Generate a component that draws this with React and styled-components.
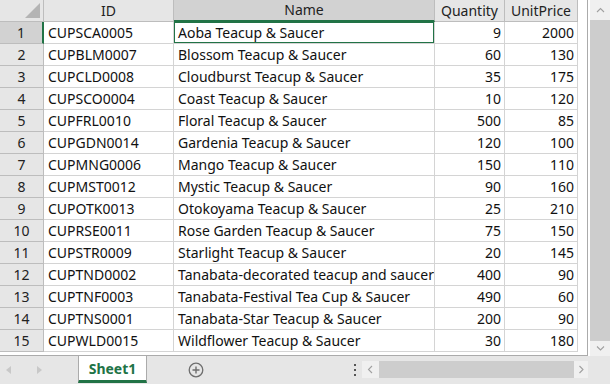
import { createGlobalStyle, styled } from "styled-components";

const GlobalStyle = createGlobalStyle`
    body {
        margin: 0;
        background: #ffffff;
        font-family: "Noto Sans", "Open Sans", sans-serif;
    }
`;

const rows = [
    ["CUPSCA0005", "Aoba Teacup & Saucer", 9, 2000],
    ["CUPBLM0007", "Blossom Teacup & Saucer", 60, 130],
    ["CUPCLD0008", "Cloudburst Teacup & Saucer", 35, 175],
    ["CUPSCO0004", "Coast Teacup & Saucer", 10, 120],
    ["CUPFRL0010", "Floral Teacup & Saucer", 500, 85],
    ["CUPGDN0014", "Gardenia Teacup & Saucer", 120, 100],
    ["CUPMNG0006", "Mango Teacup & Saucer", 150, 110],
    ["CUPMST0012", "Mystic Teacup & Saucer", 90, 160],
    ["CUPOTK0013", "Otokoyama Teacup & Saucer", 25, 210],
    ["CUPRSE0011", "Rose Garden Teacup & Saucer", 75, 150],
    ["CUPSTR0009", "Starlight Teacup & Saucer", 20, 145],
    ["CUPTND0002", "Tanabata-decorated teacup and saucer", 400, 90],
    ["CUPTNF0003", "Tanabata-Festival Tea Cup & Saucer", 490, 60],
    ["CUPTNS0001", "Tanabata-Star Teacup & Saucer", 200, 90],
    ["CUPWLD0015", "Wildflower Teacup & Saucer", 30, 180],
];

const Window = styled.div`
    width: 610px;
    height: 384px;
    display: flex;
    flex-direction: column;
    overflow: hidden;
    background: #e6e6e6;
`;

const Top = styled.div`
    height: 356px;
    display: flex;
    background: #ffffff;
`;

const Viewport = styled.div`
    width: 587px;
    border-right: 1px solid #ababab;
    border-bottom: 1px solid #ababab;
    background: #ffffff;
`;

const Sheet = styled.div`
    display: grid;
    grid-template-columns: 44px 130px 261px 70px 73px;
    grid-auto-rows: 22px;
    font-size: 14px;
    color: #111111;
`;

const Corner = styled.div`
    background: #e6e6e6;
    border-right: 1px solid #bdbdbd;
    border-bottom: 1px solid #bdbdbd;
    box-sizing: border-box;
    position: relative;
    &::after {
        content: "";
        position: absolute;
        right: 3px;
        bottom: 3px;
        border-style: solid;
        border-width: 0 0 15px 15px;
        border-color: transparent transparent #b4b4b4 transparent;
    }
`;

const ColHead = styled.div`
    box-sizing: border-box;
    background: ${(p) => (p.$active ? "#d2d2d2" : "#e6e6e6")};
    border-right: 1px solid #bdbdbd;
    border-bottom: ${(p) => (p.$active ? "2px solid #217346" : "1px solid #bdbdbd")};
    display: flex;
    align-items: center;
    justify-content: center;
    line-height: 1;
    color: #222222;
`;

const RowHead = styled.div`
    box-sizing: border-box;
    background: ${(p) => (p.$active ? "#d2d2d2" : "#e6e6e6")};
    border-right: ${(p) => (p.$active ? "2px solid #217346" : "1px solid #bdbdbd")};
    border-bottom: 1px solid #bdbdbd;
    display: flex;
    align-items: center;
    justify-content: center;
    color: #222222;
`;

const Cell = styled.div`
    box-sizing: border-box;
    border-right: 1px solid #d4d4d4;
    border-bottom: 1px solid #d4d4d4;
    display: flex;
    align-items: center;
    justify-content: ${(p) => (p.$num ? "flex-end" : "flex-start")};
    padding: 0 3px 0 4px;
    white-space: nowrap;
    overflow: hidden;
    position: relative;
    ${(p) =>
        p.$selected &&
        `
        &::after {
            content: "";
            position: absolute;
            left: -1px;
            top: -1px;
            right: -1px;
            bottom: -1px;
            border: 2px solid #217346;
        }
    `}
`;

const VScroll = styled.div`
    width: 20px;
    margin-left: 2px;
    display: flex;
    flex-direction: column;
    background: #f0f0f0;
`;

const ArrowBox = styled.div`
    height: ${(p) => p.$h || 20}px;
    width: ${(p) => p.$w || "auto"};
    display: flex;
    align-items: center;
    justify-content: center;
    background: #f0f0f0;
    color: #a8a8a8;
    flex-shrink: 0;
`;

const VThumb = styled.div`
    flex: 1;
    background: #cdcdcd;
`;

const TabBar = styled.div`
    height: 27px;
    display: flex;
    align-items: stretch;
    background: #e6e6e6;
`;

const NavArrows = styled.div`
    width: 78px;
    display: flex;
    align-items: center;
    gap: 24px;
    padding-left: 6px;
    box-sizing: border-box;
    color: #c4c4c4;
`;

const Tab = styled.div`
    width: 69px;
    box-sizing: border-box;
    background: #ffffff;
    border-left: 1px solid #ababab;
    border-right: 1px solid #ababab;
    border-bottom: 3px solid #217346;
    display: flex;
    align-items: center;
    justify-content: center;
    font-weight: 700;
    font-size: 14px;
    color: #217346;
`;

const AddButton = styled.div`
    width: 98px;
    display: flex;
    align-items: center;
    justify-content: center;
`;

const Spacer = styled.div`
    flex: 1;
`;

const Dots = styled.div`
    width: 14px;
    display: flex;
    align-items: center;
    justify-content: center;
    margin-right: 0;
`;

const HScroll = styled.div`
    width: 226px;
    height: 17px;
    align-self: center;
    margin-right: 22px;
    display: flex;
`;

const HThumb = styled.div`
    flex: 1;
    background: #cdcdcd;
`;

const Chevron = ({ dir }) => {
    const d = {
        up: "M1 5 L4.5 1.5 L8 5",
        down: "M1 1.5 L4.5 5 L8 1.5",
        left: "M5 1 L1.5 4.5 L5 8",
        right: "M1.5 1 L5 4.5 L1.5 8",
    }[dir];
    const vertical = dir === "up" || dir === "down";
    return (
        <svg width={vertical ? 9 : 7} height={vertical ? 7 : 9} viewBox={vertical ? "0 0 9 7" : "0 0 7 9"}>
            <path d={d} fill="none" stroke="#a0a0a0" strokeWidth="1.1" />
        </svg>
    );
};

const App = () => {
    return (
        <>
            <GlobalStyle />
            <Window>
                <Top>
                    <Viewport>
                        <Sheet>
                            <Corner />
                            <ColHead>ID</ColHead>
                            <ColHead $active>Name</ColHead>
                            <ColHead>Quantity</ColHead>
                            <ColHead>UnitPrice</ColHead>
                            {rows.map((r, i) => (
                                <div key={r[0]} style={{ display: "contents" }}>
                                    <RowHead $active={i === 0}>{i + 1}</RowHead>
                                    <Cell>{r[0]}</Cell>
                                    <Cell $selected={i === 0}>{r[1]}</Cell>
                                    <Cell $num>{r[2]}</Cell>
                                    <Cell $num>{r[3]}</Cell>
                                </div>
                            ))}
                        </Sheet>
                    </Viewport>
                    <VScroll>
                        <ArrowBox $h={20}>
                            <Chevron dir="up" />
                        </ArrowBox>
                        <VThumb />
                        <ArrowBox $h={15}>
                            <Chevron dir="down" />
                        </ArrowBox>
                    </VScroll>
                </Top>
                <TabBar>
                    <NavArrows>
                        <svg width="6" height="8" viewBox="0 0 6 8">
                            <path d="M5 0 L0 4 L5 8 Z" fill="#c8c8c8" />
                        </svg>
                        <svg width="6" height="8" viewBox="0 0 6 8">
                            <path d="M1 0 L6 4 L1 8 Z" fill="#c8c8c8" />
                        </svg>
                    </NavArrows>
                    <Tab>Sheet1</Tab>
                    <AddButton>
                        <svg width="16" height="16" viewBox="0 0 16 16">
                            <circle cx="8" cy="8" r="6.8" fill="none" stroke="#6e6e6e" strokeWidth="1.3" />
                            <path d="M8 4.5 V11.5 M4.5 8 H11.5" stroke="#6e6e6e" strokeWidth="1.4" />
                        </svg>
                    </AddButton>
                    <Spacer />
                    <Dots>
                        <svg width="4" height="12" viewBox="0 0 4 12">
                            <rect x="1" y="0" width="2" height="2" fill="#555" />
                            <rect x="1" y="5" width="2" height="2" fill="#555" />
                            <rect x="1" y="10" width="2" height="2" fill="#555" />
                        </svg>
                    </Dots>
                    <HScroll>
                        <ArrowBox $h={17} $w="17px">
                            <Chevron dir="left" />
                        </ArrowBox>
                        <HThumb />
                        <ArrowBox $h={17} $w="14px">
                            <Chevron dir="right" />
                        </ArrowBox>
                    </HScroll>
                </TabBar>
            </Window>
        </>
    );
};

export default App;
